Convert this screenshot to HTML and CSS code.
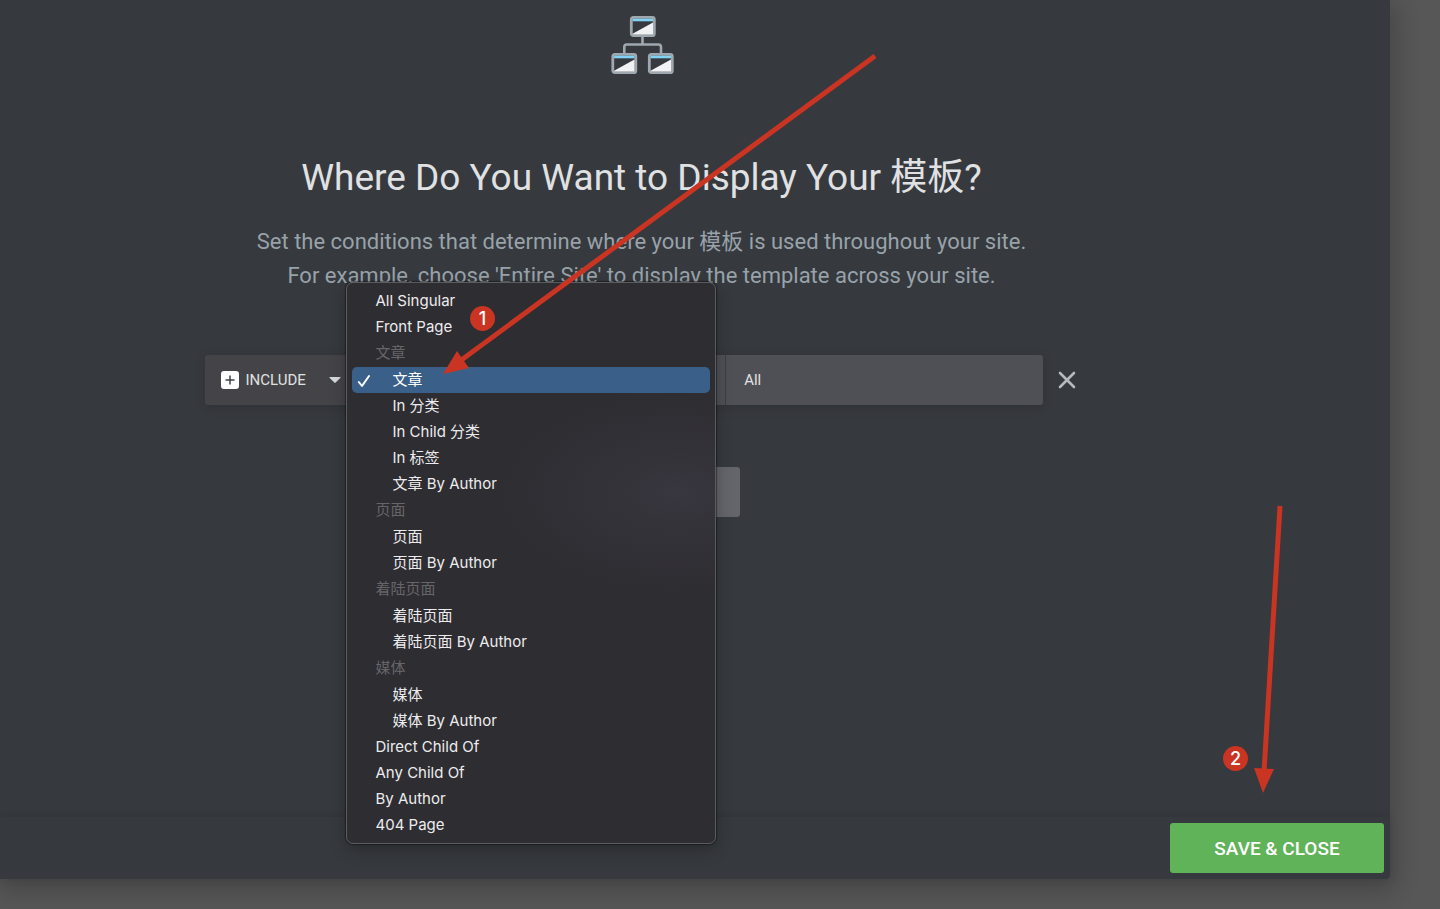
FILE: index.html
```
<!DOCTYPE html>
<html lang="zh">
<head>
    <meta charset="UTF-8">
    <meta name="viewport" content="width=device-width, initial-scale=1.0">
    <title>Display Conditions</title>
    <link rel="stylesheet" href="styles.css">
</head>
<body>
    <div class="modal">
        <main class="content">
            <svg class="tree-icon" width="64" height="60" viewBox="0 0 64 60" aria-hidden="true">
                <defs>
                    <g id="page">
                        <rect x="1.3" y="1.3" width="23" height="18.4" rx="2" fill="#36393e" stroke="#9fa8ae" stroke-width="2.8"/>
                        <path d="M2.6 17.8L23 6.6v11.8H2.6z" fill="#f1f2f4"/>
                        <path d="M2.6 4h20.4" stroke="#7fd3f3" stroke-width="2.6"/>
                    </g>
                </defs>
                <path d="M32.5 21v8M14.3 38v-6q0-2.5 2.5-2.5h31.7q2.5 0 2.5 2.5v6" fill="none" stroke="#9fa8ae" stroke-width="2.6"/>
                <use href="#page" x="20" y="1"/>
                <use href="#page" x="1.5" y="38"/>
                <use href="#page" x="38" y="38"/>
            </svg>
            <h1>Where Do You Want to Display Your 模板?</h1>
            <p class="intro">Set the conditions that determine where your 模板 is used throughout your site.<br>For example, choose 'Entire Site' to display the template across your site.</p>

            <div class="condition">
                <div class="fields">
                    <div class="field type">
                        <svg class="plus" width="18" height="18" viewBox="0 0 18 18" aria-hidden="true">
                            <rect width="18" height="18" rx="3" fill="#fff"/>
                            <path d="M9 4.5v9M4.5 9h9" stroke="#3f4347" stroke-width="1.5"/>
                        </svg>
                        <select aria-label="Type">
                            <option>INCLUDE</option>
                        </select>
                        <svg class="caret" width="12" height="6" viewBox="0 0 12 6" aria-hidden="true"><path d="M1 0h10q1 .2.3 1L6.700 5.600q-.7.6-1.400 0L.7 1Q0 .2 1 0z" fill="#d5d8dc"/></svg>
                    </div>
                    <div class="field name">
                        <select aria-label="Condition">
                            <option></option>
                        </select>
                        <ul class="menu" role="listbox" aria-label="Condition">
                            <li role="option">All Singular</li>
                            <li role="option">Front Page</li>
                            <li class="group">文章</li>
                            <li class="sub selected" role="option" aria-selected="true">
                                <svg class="check" width="14" height="14" viewBox="0 0 14 14" aria-hidden="true"><path d="M1.8 8L5 12 12 2" fill="none" stroke="#fff" stroke-width="2" stroke-linecap="round" stroke-linejoin="round"/></svg>
                                文章
                            </li>
                            <li class="sub" role="option">In 分类</li>
                            <li class="sub" role="option">In Child 分类</li>
                            <li class="sub" role="option">In 标签</li>
                            <li class="sub" role="option">文章 By Author</li>
                            <li class="group">页面</li>
                            <li class="sub" role="option">页面</li>
                            <li class="sub" role="option">页面 By Author</li>
                            <li class="group">着陆页面</li>
                            <li class="sub" role="option">着陆页面</li>
                            <li class="sub" role="option">着陆页面 By Author</li>
                            <li class="group">媒体</li>
                            <li class="sub" role="option">媒体</li>
                            <li class="sub" role="option">媒体 By Author</li>
                            <li role="option">Direct Child Of</li>
                            <li role="option">Any Child Of</li>
                            <li role="option">By Author</li>
                            <li role="option">404 Page</li>
                        </ul>
                    </div>
                    <div class="field target">
                        <select aria-label="Target">
                            <option>All</option>
                        </select>
                    </div>
                </div>
                <button class="remove" type="button" aria-label="Remove">
                    <svg width="18" height="18" viewBox="0 0 18 18"><path d="M2 2l14 14M16 2L2 16" stroke="#b4bac0" stroke-width="2.6" stroke-linecap="round"/></svg>
                </button>
            </div>
            <button class="add" type="button" aria-label="Add Condition"></button>
        </main>
        <footer>
            <button class="save" type="button">SAVE &amp; CLOSE</button>
        </footer>
    </div>

    <!-- step marks -->
    <svg class="arrows" aria-hidden="true">
        <path d="M875 56L460 361M1280 506L1264 772" stroke="#c93522" stroke-width="5"/>
        <path d="M443 374L457 351 469 368zM1254 768L1274 769 1263 793z" fill="#c93522"/>
    </svg>
    <span class="step step-one">1</span>
    <span class="step step-two">2</span>
</body>
</html>
```
FILE: styles.css
```
* {
    box-sizing: border-box;
}
body {
    margin: 0;
    background: #575757;
    font-family: Roboto, "Noto Sans CJK SC", sans-serif;
    color: #e0e1e3;
    position: relative;
    overflow-x: hidden;
}
button, select {
    font-family: inherit;
    border: none;
    padding: 0;
    cursor: pointer;
}
.modal {
    display: flex;
    flex-direction: column;
    min-height: calc(100vh - 30px);
    margin: 0 50px 30px 0;
    background: #36393e;
    border-radius: 0 0 4px 0;
    box-shadow: 2px 8px 24px 4px rgba(0, 0, 0, 0.2);
}
.content {
    flex: 1;
    display: flex;
    flex-direction: column;
    align-items: center;
    padding: 15px 107px 0 0;
}
.tree-icon {
    display: block;
}
h1 {
    margin: 80px 0 0;
    font-size: 37px;
    line-height: 46px;
    font-weight: 400;
}
.intro {
    margin: 24px 0 0;
    font-size: 22px;
    line-height: 34px;
    font-weight: 400;
    color: #98a2a9;
    text-align: center;
}
.condition {
    display: flex;
    align-items: center;
    gap: 15px;
    width: 100%;
    max-width: 874px;
    margin-top: 62px;
}
.fields {
    flex: 1;
    display: flex;
    height: 50px;
    border-radius: 3px;
    box-shadow: 0 2px 12px rgba(0, 0, 0, 0.14);
}
.field {
    display: flex;
    align-items: center;
    background: #4f5055;
}
.field select {
    appearance: none;
    flex: 1;
    min-width: 0;
    height: 100%;
    background: transparent;
    color: #e0e1e3;
    font-size: 15px;
}
.type {
    width: 141px;
    padding: 0 5px 0 16px;
    background: #444448;
    border-radius: 3px 0 0 3px;
}
.type select {
    padding-left: 7px;
}
.name {
    flex: 6;
    position: relative;
    border-right: 1px solid #3c3d42;
}
.target {
    flex: 5;
    border-radius: 0 3px 3px 0;
}
.target select {
    padding-left: 18px;
}
.remove {
    display: flex;
    padding: 8px 3px 8px 0;
    background: none;
}
.add {
    width: 196px;
    height: 50px;
    margin-top: 62px;
    border-radius: 3px;
    background: #64656a;
}
.menu {
    position: absolute;
    top: -73px;
    left: 0;
    z-index: 1;
    width: 370px;
    margin: 0;
    padding: 5px;
    list-style: none;
    background: radial-gradient(ellipse 180px 100px at 330px 210px, #38363e, #2e2d32);
    border: 1px solid #5b5b60;
    border-radius: 7px;
    box-shadow: 0 0 1px 1px rgba(0, 0, 0, 0.4), 0 6px 16px rgba(0, 0, 0, 0.25);
    font-family: Inter, "Noto Sans CJK SC", sans-serif;
    font-size: 15px;
    line-height: 26px;
    color: #ececee;
}
.menu li {
    position: relative;
    height: 26px;
    padding-left: 24px;
    border-radius: 5px;
    white-space: nowrap;
}
.menu .sub {
    padding-left: 41px;
}
.menu .group {
    height: 27px;
    color: #66656a;
}
.menu .selected {
    background: #3a608a;
    color: #fff;
}
.check {
    position: absolute;
    left: 5px;
    top: 7px;
}
footer {
    display: flex;
    justify-content: flex-end;
    padding: 6px;
    box-shadow: 0 0 8px rgba(0, 0, 0, 0.12);
}
.save {
    width: 214px;
    height: 50px;
    border-radius: 3px;
    background: #61b35a;
    color: #fff;
    font-size: 19px;
    font-weight: 500;
}
.arrows {
    position: absolute;
    top: 0;
    left: 0;
    z-index: 2;
    width: 100%;
    height: 100%;
    pointer-events: none;
}
.step {
    position: absolute;
    z-index: 2;
    width: 25px;
    height: 25px;
    border-radius: 50%;
    background: #c93522;
    color: #fff;
    font-family: Inter, sans-serif;
    font-size: 18px;
    font-weight: 500;
    line-height: 25px;
    text-align: center;
}
.step-one {
    left: 470px;
    top: 306px;
}
.step-two {
    left: 1223px;
    top: 746px;
}
```
